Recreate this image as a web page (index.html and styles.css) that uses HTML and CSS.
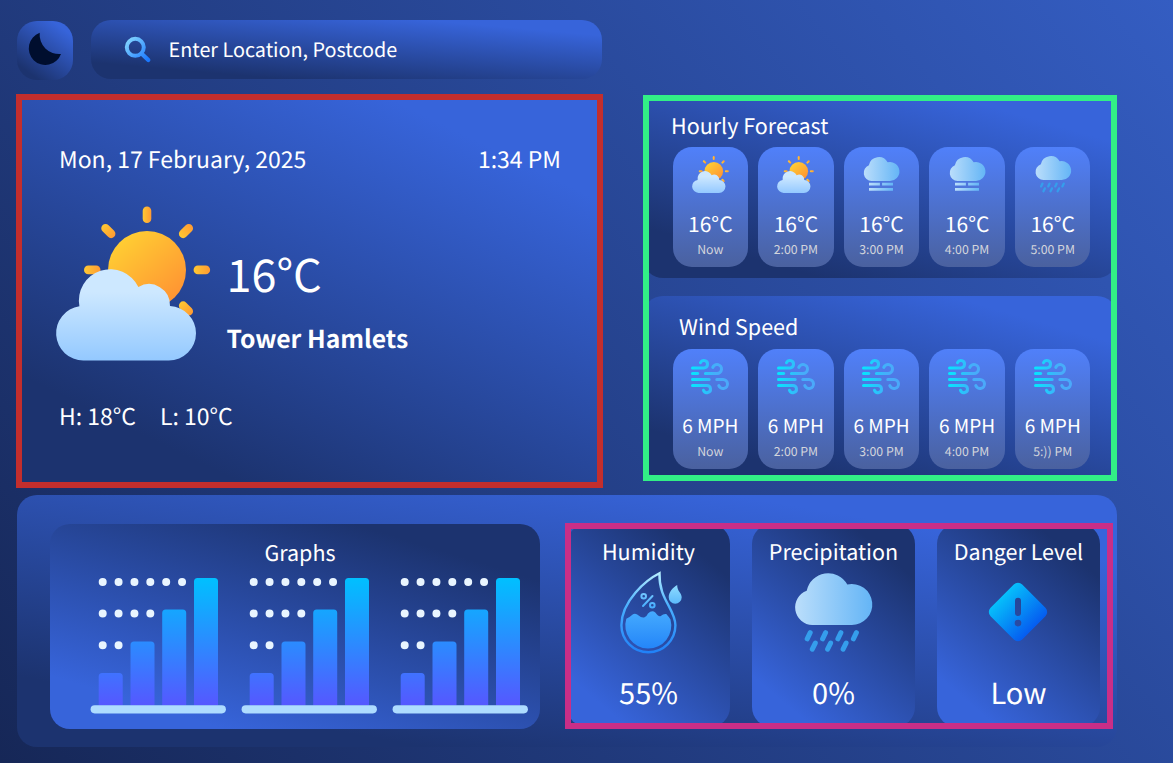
FILE: index.html
```html
<!DOCTYPE html>
<html lang="en">
<head>
<meta charset="utf-8">
<title>Weather dashboard</title>
<link rel="stylesheet" href="styles.css">
</head>
<body>
<svg class="defs" width="0" height="0" aria-hidden="true">
  <defs>
    <linearGradient id="sun" x1="0.1" y1="0.1" x2="0.8" y2="0.9"><stop offset="0" stop-color="#ffd033"/><stop offset="1" stop-color="#ff9533"/></linearGradient>
    <linearGradient id="ray" x1="0" y1="0" x2="1" y2="0"><stop offset="0" stop-color="#ffc933"/><stop offset="1" stop-color="#ff9a33"/></linearGradient>
    <linearGradient id="cloud" x1="0" y1="0" x2="0" y2="1"><stop offset=".25" stop-color="#cde8ff"/><stop offset="1" stop-color="#94c9ff"/></linearGradient>
    <linearGradient id="puff" x1="0" y1="0" x2="1" y2="0"><stop offset="0" stop-color="#bbdefb"/><stop offset="1" stop-color="#64b5f6"/></linearGradient>
    <linearGradient id="wind" gradientUnits="userSpaceOnUse" x1="1" y1="0" x2="38" y2="0"><stop offset="0" stop-color="#05e6ff"/><stop offset=".42" stop-color="#2ec0fb"/><stop offset=".62" stop-color="#45aefa"/><stop offset="1" stop-color="#4ba8fa"/></linearGradient>
    <linearGradient id="bar" gradientUnits="userSpaceOnUse" x1="0" y1="0" x2="0" y2="127"><stop offset="0" stop-color="#00c0ff"/><stop offset="1" stop-color="#5558ff"/></linearGradient>
    <linearGradient id="water" gradientUnits="userSpaceOnUse" x1="0" y1="0" x2="0" y2="83"><stop offset="0" stop-color="#b9f0ff"/><stop offset=".42" stop-color="#4ab0ff"/><stop offset="1" stop-color="#1f80f8"/></linearGradient>
    <linearGradient id="minidrop" x1="0" y1="0" x2="0" y2="1"><stop offset="0" stop-color="#8fdcff"/><stop offset="1" stop-color="#5cb9fb"/></linearGradient>
    <linearGradient id="lens" gradientUnits="userSpaceOnUse" x1="3" y1="3" x2="24" y2="24"><stop offset="0" stop-color="#84d6ff"/><stop offset="1" stop-color="#1a78ff"/></linearGradient>
    <linearGradient id="danger" x1="0" y1="0" x2="1" y2="0"><stop offset="0" stop-color="#06bffb"/><stop offset="1" stop-color="#055cf0"/></linearGradient>

    <symbol id="i-sun" viewBox="56 206 154.5 155">
      <circle cx="147" cy="270" r="39" fill="url(#sun)"/>
      <rect x="142.7" y="206.5" width="8.6" height="16.6" rx="4.3" fill="url(#ray)"/>
      <rect x="84" y="265.6" width="16.5" height="8.6" rx="4.3" fill="url(#ray)"/>
      <rect x="193.6" y="265.6" width="16.5" height="8.6" rx="4.3" fill="url(#ray)"/>
      <rect x="100.1" y="226.7" width="16.5" height="8.6" rx="4.3" fill="url(#ray)" transform="rotate(45 108.3 231)"/>
      <rect x="177.7" y="226.7" width="16.5" height="8.6" rx="4.3" fill="url(#ray)" transform="rotate(-45 186 231)"/>
      <rect x="177.7" y="304.2" width="16.5" height="8.6" rx="4.3" fill="url(#ray)" transform="rotate(45 186 308.5)"/>
      <path fill="url(#cloud)" d="M83.300 360.500A27.300 27.300 0 0 1 79.400 306.200A31.300 31.300 0 0 1 138.400 287A21 21 0 0 1 170 306.100A27.300 27.300 0 0 1 196 333.200A27.300 27.300 0 0 1 168.700 360.500Z"/>
    </symbol>
    <symbol id="i-fog" viewBox="0 0 36 34">
      <path fill="url(#puff)" d="M8.500 23.500A8.200 8.200 0 0 1 5.900 7.700A10.100 10.100 0 0 1 24.600 4.800A9.500 9.500 0 1 1 26.500 23.500Z"/>
      <path fill="url(#puff)" d="M6 25.300H16.900V28.100H6ZM19.100 25.300H30V28.100H19.100ZM6 30.400H30V33.200H6Z"/>
    </symbol>
    <symbol id="i-rain" viewBox="0 0 78 78">
      <path fill="url(#puff)" d="M18.400 51A17.700 17.700 0 0 1 12.700 16.700A21.900 21.900 0 0 1 53.300 10.500A20.500 20.500 0 1 1 57.500 51Z"/>
      <g class="drops">
        <path d="M16.200 58.700L13.200 64.800M31.600 58.700L28.600 64.800M46.900 58.700L43.900 64.800M62.400 58.700L59.400 64.800M21.300 69.100L18.300 75.200M36.600 69.100L33.600 75.200M52.100 69.100L49.100 75.200"/>
      </g>
    </symbol>
    <symbol id="i-wind" viewBox="0 0 38 35">
      <g fill="none" stroke="url(#wind)" stroke-width="3" stroke-linecap="round">
        <path d="M1.500 8.900H12.800a3.700 3.700 0 1 0-3.300-5.300"/>
        <path d="M1.500 14.500L6.800 14.510"/>
        <path d="M14.400 14.500H26a4.500 4.500 0 1 0-4.200-6.100"/>
        <path d="M1.500 20.500L18.200 20.510"/>
        <path d="M25.800 20.500H32a4.500 4.500 0 1 1-4.200 6.100"/>
        <path d="M1.500 26.400H15.900a3.600 3.600 0 1 1-3.400 4.800"/>
      </g>
    </symbol>
    <symbol id="i-chart" viewBox="0 0 136 136">
      <g fill="url(#bar)" transform="translate(.7 0)">
        <path d="M8 127.500V98.500a3.500 3.500 0 0 1 3.500-3.500H28.500a3.500 3.500 0 0 1 3.500 3.500V127.500Z"/>
        <path d="M39.800 127.500V67a3.500 3.500 0 0 1 3.500-3.500H60.300a3.500 3.500 0 0 1 3.500 3.500V127.500Z"/>
        <path d="M71.500 127.500V35a3.500 3.500 0 0 1 3.500-3.500H92a3.500 3.500 0 0 1 3.500 3.500V127.500Z"/>
        <path d="M103.300 127.500V3.500a3.500 3.500 0 0 1 3.500-3.500H123.800a3.500 3.500 0 0 1 3.500 3.500V127.500Z"/>
      </g>
      <rect x=".6" y="127.200" width="135.300" height="8.200" rx="4.100" fill="#aedcff"/>
      <path fill="none" stroke="#e9f5ff" stroke-width="8" stroke-linecap="round" stroke-dasharray="0 15.870" d="M12.700 3.900H93M12.700 35.600H61M12.700 67.300H29"/>
    </symbol>
  </defs>
</svg>

<div class="page">
  <div class="top">
    <div class="left">
      <header class="bar">
        <button class="theme" aria-label="Dark mode">
          <svg width="34" height="34" viewBox="28 32 34 34"><path fill="#000e2e" d="M39.700 32.800A16.600 16.600 0 1 0 61 54A19.500 19.500 0 0 1 39.700 32.800Z"/></svg>
        </button>
        <div class="search">
          <svg width="28" height="28" viewBox="0 0 28 28" fill="none" stroke="url(#lens)"><circle cx="11.300" cy="11.300" r="8.500" stroke-width="4"/><path d="M18 18L24.300 24.100" stroke-width="4.200" stroke-linecap="round"/></svg>
          <span>Enter Location, Postcode</span>
        </div>
      </header>
      <section class="today">
        <div class="today-bg">
          <div class="when"><span class="date">Mon, 17 February, 2025</span><span class="time">1:34 PM</span></div>
          <div class="now">
            <svg width="154.500" height="155"><use href="#i-sun"/></svg>
            <div class="reading"><div class="big">16°C</div><div class="place">Tower Hamlets</div></div>
          </div>
          <div class="range"><span>H: 18°C</span><span>L: 10°C</span></div>
        </div>
      </section>
    </div>

    <section class="forecasts">
      <div class="panel">
        <h2>Hourly Forecast</h2>
        <div class="hours">
          <div class="hour"><svg class="i-sun"><use href="#i-sun"/></svg><b>16°C</b><small>Now</small></div>
          <div class="hour"><svg class="i-sun"><use href="#i-sun"/></svg><b>16°C</b><small>2:00 PM</small></div>
          <div class="hour"><svg class="i-fog"><use href="#i-fog"/></svg><b>16°C</b><small>3:00 PM</small></div>
          <div class="hour"><svg class="i-fog"><use href="#i-fog"/></svg><b>16°C</b><small>4:00 PM</small></div>
          <div class="hour"><svg class="i-rain"><use href="#i-rain"/></svg><b>16°C</b><small>5:00 PM</small></div>
        </div>
      </div>
      <div class="panel wind">
        <h2>Wind Speed</h2>
        <div class="hours">
          <div class="hour"><svg class="i-wind"><use href="#i-wind"/></svg><b>6 MPH</b><small>Now</small></div>
          <div class="hour"><svg class="i-wind"><use href="#i-wind"/></svg><b>6 MPH</b><small>2:00 PM</small></div>
          <div class="hour"><svg class="i-wind"><use href="#i-wind"/></svg><b>6 MPH</b><small>3:00 PM</small></div>
          <div class="hour"><svg class="i-wind"><use href="#i-wind"/></svg><b>6 MPH</b><small>4:00 PM</small></div>
          <div class="hour"><svg class="i-wind"><use href="#i-wind"/></svg><b>6 MPH</b><small>5:)) PM</small></div>
        </div>
      </div>
    </section>
  </div>

  <section class="bottom">
    <div class="graphs">
      <h2>Graphs</h2>
      <div class="charts">
        <svg width="136" height="136"><use href="#i-chart"/></svg>
        <svg width="136" height="136"><use href="#i-chart"/></svg>
        <svg width="136" height="136"><use href="#i-chart"/></svg>
      </div>
    </div>
    <div class="stats">
      <div class="stat">
        <h2>Humidity</h2>
        <div class="pic">
          <svg class="humidity" width="64" height="83" viewBox="0 0 64 83">
            <path fill="none" stroke="url(#water)" stroke-width="2.400" stroke-linejoin="miter" d="M40.500 2.300C27 9 2.400 30 2.400 54.200a27 27 0 0 0 54 0C56.400 38 39.500 28 40.500 2.300Z"/>
            <path fill="url(#water)" d="M7.300 47.800Q11.500 45.500 14 43.200Q16 42 18.200 43.500Q22.500 47.300 25.600 46.200Q27.800 45.200 29 42.500Q33 38.500 36.300 41.500Q39.300 46 41.800 45Q44.500 42.500 47.300 43Q50 46 51.500 48.500A23 23 0 1 1 7.300 47.800Z"/>
            <g fill="none" stroke="url(#water)" stroke-width="2"><circle cx="24.700" cy="25.300" r="2.300"/><circle cx="33.300" cy="34.300" r="2.300"/><path stroke-linecap="round" d="M33.500 25L24 35"/></g>
            <path fill="url(#minidrop)" d="M58.200 14C54 16.500 49.700 21 49.700 26.200a6.500 6.500 0 0 0 13 0C62.700 22 58 20 58.200 14Z"/>
          </svg>
        </div>
        <strong>55%</strong>
      </div>
      <div class="stat">
        <h2>Precipitation</h2>
        <div class="pic"><svg class="rainfall" width="78" height="78"><use href="#i-rain"/></svg></div>
        <strong>0%</strong>
      </div>
      <div class="stat">
        <h2>Danger Level</h2>
        <div class="pic">
          <svg class="alert" width="60" height="60" viewBox="-30 -30 60 60">
            <mask id="bang"><rect x="-30" y="-30" width="60" height="60" fill="#fff"/><rect x="-3" y="-14.300" width="6" height="18.300" rx="3"/><circle cy="11.100" r="3.300"/></mask>
            <g mask="url(#bang)"><rect x="-22.400" y="-22.400" width="44.800" height="44.800" rx="6" fill="url(#danger)" transform="rotate(45)"/></g>
          </svg>
        </div>
        <strong>Low</strong>
      </div>
    </div>
  </section>
</div>
</body>
</html>
```
FILE: styles.css
```css
:root {
  --stops: #1c336f 16%, #3764da 85%;
}

* { box-sizing: border-box; }

body {
  margin: 0;
  color: #fff;
  font-family: "Noto Sans CJK SC", "Noto Sans", sans-serif;
  text-rendering: geometricPrecision;
}

svg { display: block; flex: none; }
svg, symbol { overflow: visible; }
.defs { position: absolute; }

h2 {
  margin: 0;
  font-size: 21.500px;
  line-height: 30px;
  font-weight: 400;
  white-space: nowrap;
}

.page {
  width: 1173px;
  height: 763px;
  padding: 20px 0 0 16px;
  overflow: hidden;
  background: linear-gradient(50deg, #162757, #345dc2);
}

.top { display: flex; gap: 41px; height: 475px; }
.left { width: 586px; }

.bar { display: flex; gap: 18px; height: 60px; padding-left: 1px; }

.theme {
  display: grid;
  place-items: center;
  width: 56px;
  height: 59px;
  margin-top: 1px;
  padding: 0 0 3px;
  border: 0;
  border-radius: 20px;
  background: linear-gradient(36deg, var(--stops));
}

.search {
  display: flex;
  align-items: center;
  gap: 17px;
  width: 511px;
  height: 59px;
  padding-left: 32.500px;
  border-radius: 20px;
  background: linear-gradient(5deg, var(--stops));
  font-size: 19.800px;
  line-height: 30px;
}
.search span { margin-top: -2px; }

.today {
  width: 587px;
  height: 394px;
  margin-top: 14px;
  border: 6px solid #c32e2d;
}
.today-bg {
  height: 382px;
  padding: 43px 36px 0 37px;
  background: linear-gradient(26deg, var(--stops));
}
.when { display: flex; justify-content: space-between; font-size: 23px; line-height: 30px; }
.now { display: flex; gap: 16px; margin: 33px 0 0 -3px; }
.big { margin-top: 37px; font-size: 45px; line-height: 60px; }
.place { margin-top: 20px; font-size: 24.700px; line-height: 30px; font-weight: 700; }
.range { display: flex; gap: 24px; margin-top: 39px; font-size: 23px; line-height: 30px; }

.forecasts {
  position: relative;
  width: 474px;
  height: 386px;
  margin-top: 75px;
}
.forecasts::after {
  content: "";
  position: absolute;
  inset: 0;
  border: 6px solid #32ef86;
}
.panel {
  height: 183px;
  padding: 16px 0 0 29.500px;
  border-radius: 20px;
  background: linear-gradient(16deg, var(--stops));
}
.panel h2 { margin-left: -1.500px; }
.wind { margin-top: 18px; }
.wind h2 { margin-left: 6.500px; }
.hours { display: flex; gap: 10px; width: 418px; margin-top: 6px; }
.hour {
  display: flex;
  flex-direction: column;
  align-items: center;
  flex: 1 1 0;
  height: 120px;
  padding-top: 9px;
  border-radius: 19px;
  background: linear-gradient(#5080fa, #4a619f);
  white-space: nowrap;
}
.hour svg { height: 37px; margin-bottom: 16px; }
.hour b { font-weight: 400; font-size: 21px; line-height: 30px; }
.hour small { margin-top: 0; font-size: 12.300px; line-height: 20px; color: #d3d5dc; }
.i-sun { width: 37px; }
.i-fog { width: 36px; }
.i-rain { width: 36px; }
.i-wind { width: 38px; }
.wind .hours { margin-top: 7px; }
.wind b { font-size: 19px; }

.drops { fill: none; stroke: #359eec; stroke-width: 5; stroke-linecap: round; }
.hour .drops { stroke: #2292ec; }

.bottom {
  display: flex;
  gap: 25px;
  width: 1100px;
  height: 252px;
  margin-left: 1px;
  padding: 28px 0 0 33px;
  border-radius: 20px;
  background: linear-gradient(9.8deg, var(--stops));
}
.graphs {
  width: 490px;
  height: 205px;
  margin-top: 1px;
  padding-top: 14px;
  border-radius: 20px;
  background: linear-gradient(197deg, var(--stops));
}
.graphs h2 { padding-left: 10px; text-align: center; }
.charts { display: flex; gap: 15px; margin: 10px 0 0 40px; }

.stats {
  position: relative;
  display: flex;
  gap: 22px;
  width: 548px;
  height: 206px;
  padding: 1px 13px 2px 2px;
}
.stats::after {
  content: "";
  position: absolute;
  inset: 0;
  border: 6px solid #c92e87;
}
.stat {
  display: flex;
  flex-direction: column;
  align-items: center;
  flex: 1 1 0;
  padding-top: 13px;
  border-radius: 20px;
  background: linear-gradient(220deg, var(--stops));
}
.pic { display: grid; place-items: center; height: 90px; }
.humidity { margin-left: 4px; }
.rainfall { margin: 1px 1px 0 -1px; }
.alert { margin-right: 1px; }
.stat strong { margin-top: 15px; font-size: 29px; line-height: 40px; font-weight: 400; }
```
